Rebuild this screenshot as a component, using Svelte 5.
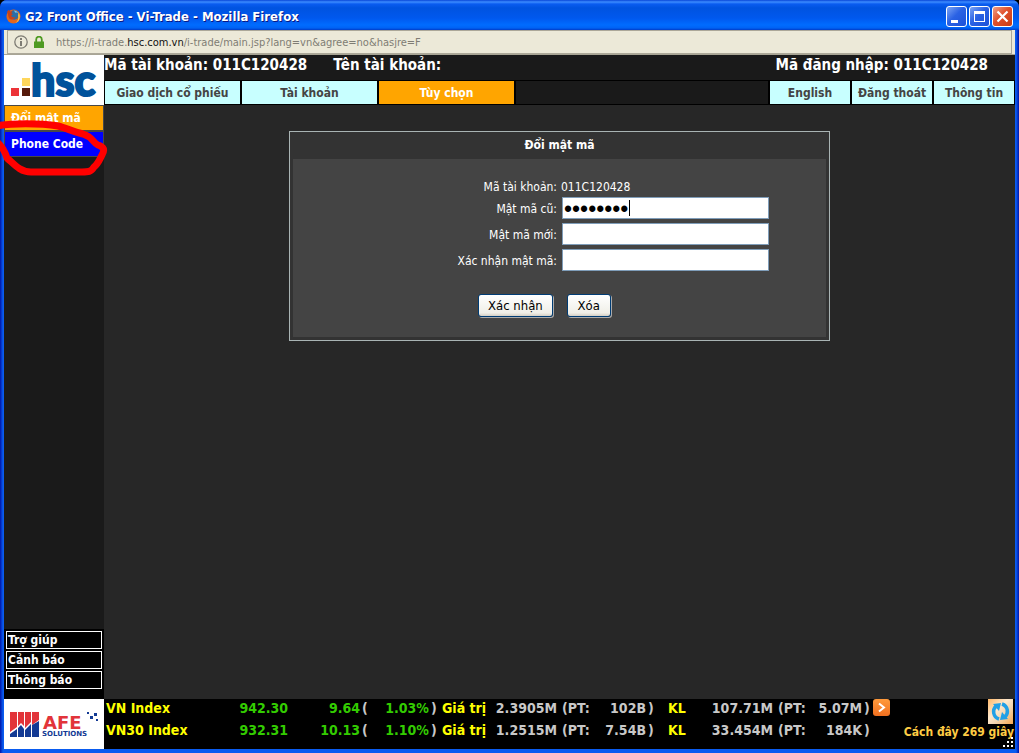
<script>
  const tabs = ['Giao dịch cổ phiếu', 'Tài khoản', 'Tùy chọn'];
  const actions = ['English', 'Đăng thoát', 'Thông tin'];
  const help = ['Trợ giúp', 'Cảnh báo', 'Thông báo'];
  const columns = [116, 68, 72, 10, 59, 11, 46, 71, 38, 51, 20, 34, 73, 38, 51, 9, 20];
  const indices = [
    { name: 'VN Index', value: '942.30', change: '9.64', pct: '1.03%', amount: '2.3905M', amountPt: '102B', volume: '107.71M', volumePt: '5.07M' },
    { name: 'VN30 Index', value: '932.31', change: '10.13', pct: '1.10%', amount: '1.2515M', amountPt: '7.54B', volume: '33.454M', volumePt: '184K' }
  ];
  let oldPassword = $state('abcdefgh');
  let newPassword = $state('');
  let confirmPassword = $state('');

  function clearForm() {
    oldPassword = '';
    newPassword = '';
    confirmPassword = '';
  }
</script>

<div class="window">
  <header class="titlebar">
    <svg class="fox" width="15" height="15" viewBox="0 0 15 15" aria-hidden="true">
      <circle cx="7.5" cy="7.5" r="7" fill="#e5661b" />
      <circle cx="8.2" cy="6" r="4.7" fill="#2b6ea8" />
      <path d="M8 1.5c2 .2 3.3 1 4.2 2.5-1-.6-2-.7-3-.3z" fill="#7cc4e8" />
      <path d="M1 3c.6-1 1-1.700 2-2.200.2 1 .8 1.400 1.800 1.600l2 .2-1.500 1.700 1.500 1-1.600 1.300c.5 2.200 3.200 2.300 4.500 1.200-1 3-5 3.700-6.700 1.200C2 7.500 2.400 5 1 3z" fill="#c8431a" />
      <path d="M12.500 3.500c2.500 3.500 1.300 9-3 10.500 2.200-1.500 3.400-4.500 2.600-7.500z" fill="#f9c846" />
    </svg>
    <h1>G2 Front Office - Vi-Trade - Mozilla Firefox</h1>
    <div class="winbuttons">
      <button type="button" aria-label="Minimize">
        <svg width="21" height="21" viewBox="0 0 21 21"><path d="M5 14h7v3H5z" fill="#fff" /></svg>
      </button>
      <button type="button" aria-label="Maximize">
        <svg width="21" height="21" viewBox="0 0 21 21"><path d="M5 5h11v11H5zM6 8v7h9V8z" fill="#fff" fill-rule="evenodd" /></svg>
      </button>
      <button type="button" class="close" aria-label="Close">
        <svg width="21" height="21" viewBox="0 0 21 21"><path d="M5.500 5.500l10 10M15.500 5.500l-10 10" stroke="#fff" stroke-width="2.200" /></svg>
      </button>
    </div>
  </header>

  <div class="address">
    <div class="addressbox">
      <svg width="14" height="14" viewBox="0 0 14 14" aria-hidden="true">
        <circle cx="7" cy="7" r="6.200" fill="none" stroke="#7d7b73" stroke-width="1.300" />
        <path d="M6 3h2v2H6zM6 6h2v5H6z" fill="#7d7b73" />
      </svg>
      <svg class="lock" width="10" height="12" viewBox="0 0 10 12" aria-hidden="true">
        <path d="M2.200 6V3.500a2.800 2.800 0 0 1 5.600 0V6" fill="none" stroke="#4f9a22" stroke-width="1.800" />
        <path d="M0 5.500h10V12H0z" fill="#4f9a22" />
      </svg>
      <span class="url">https://i-trade.<b>hsc.com.vn</b>/i-trade/main.jsp?lang=vn&amp;agree=no&amp;hasjre=F</span>
    </div>
  </div>

  <div class="app">
    <aside class="sidebar">
      <svg class="hsc" width="100" height="50" viewBox="0 0 100 50" role="img" aria-label="hsc">
        <path d="M18 23h8v8h-8z" fill="#fed65b" />
        <path d="M7 33h8v8H7z" fill="#ec3338" />
        <path d="M18 33h8v8h-8z" fill="#561a0b" />
        <text x="27" y="41" class="hsctext">hsc</text>
      </svg>
      <nav class="menu">
        <a href="#password" class="current">Đổi mật mã</a>
        <a href="#phone">Phone Code</a>
      </nav>
      <div class="help">
        {#each help as item}
          <button type="button">{item}</button>
        {/each}
      </div>
    </aside>

    <div class="content">
      <div class="account">
        <span>Mã tài khoản: 011C120428</span>
        <span>Tên tài khoản:</span>
        <span class="login">Mã đăng nhập: 011C120428</span>
      </div>
      <nav class="tabs">
        {#each tabs as tab, i}
          <a href="#tab" class="tab" class:selected={i === 2}>{tab}</a>
        {/each}
        <span class="filler"></span>
        {#each actions as action}
          <a href="#action" class="action">{action}</a>
        {/each}
      </nav>
      <main>
        <form class="panel" onsubmit={(e) => e.preventDefault()}>
          <h2>Đổi mật mã</h2>
          <div class="fields">
            <div class="row first">
              <span class="label">Mã tài khoản:</span>
              <span class="value">011C120428</span>
            </div>
            <div class="row">
              <label for="old">Mật mã cũ:</label>
              <div class="box">
                <input id="old" type="password" autocomplete="off" bind:value={oldPassword} />
                <span class="caret"></span>
              </div>
            </div>
            <div class="row">
              <label for="new">Mật mã mới:</label>
              <div class="box"><input id="new" type="password" autocomplete="off" bind:value={newPassword} /></div>
            </div>
            <div class="row">
              <label for="confirm">Xác nhận mật mã:</label>
              <div class="box"><input id="confirm" type="password" autocomplete="off" bind:value={confirmPassword} /></div>
            </div>
            <div class="buttons">
              <button type="submit">Xác nhận</button>
              <button type="button" onclick={clearForm}>Xóa</button>
            </div>
          </div>
        </form>
      </main>
    </div>
  </div>

  <footer>
    <svg class="afe" width="100" height="50" viewBox="0 0 100 50" role="img" aria-label="AFE Solutions">
      <path d="M6 13h7v15l-7 5zM14 13h6v14l-3-3-3 3zM21 13h6v10l-6 6zM28 13h7v8l-7 5z" fill="#e2343a" />
      <path d="M6 38v-3l7-5v8zM14 38v-9l3-3 3 4v8zM21 38v-7l6-6v13zM28 38V26l7-4v16z" fill="#133a94" />
      <text x="39" y="30" class="afetext">AFE</text>
      <text x="38" y="37" class="soltext">SOLUTIONS</text>
      <path d="M83 13h2v2h-2zM86 17h3v3h-3zM90 14h3v3h-3zM92 20h2v2h-2z" fill="#133a94" />
    </svg>
    <table>
      <colgroup>
        {#each columns as width}<col style="width: {width}px" />{/each}
      </colgroup>
      <tbody>
        {#each indices as row, i}
          <tr>
            <th scope="row">{row.name}</th>
            <td class="up">{row.value}</td>
            <td class="up">{row.change}</td>
            <td class="left">(</td>
            <td class="up">{row.pct}</td>
            <td class="left">)</td>
            <td class="left key">Giá trị</td>
            <td>{row.amount}</td>
            <td class="pt">(PT:</td>
            <td>{row.amountPt}</td>
            <td class="left">)</td>
            <td class="left key">KL</td>
            <td>{row.volume}</td>
            <td class="pt">(PT:</td>
            <td>{row.volumePt}</td>
            <td class="left">)</td>
            <td class="left">
              {#if i === 0}
                <button type="button" class="more" aria-label="Next">
                  <svg width="17" height="17" viewBox="0 0 17 17"><path d="M6 4.500l5 4-5 4" fill="none" stroke="#fff" stroke-width="2" /></svg>
                </button>
              {/if}
            </td>
          </tr>
        {/each}
      </tbody>
    </table>
    <div class="status">
      <button type="button" class="refresh" aria-label="Refresh">
        <svg width="25" height="25" viewBox="0 0 25 25">
          <path d="M11 20C5 18 4 11 8 7" fill="none" stroke="#22a0e6" stroke-width="3.500" />
          <path d="M5 5l8-1-2 8z" fill="#22a0e6" />
          <path d="M14 5c6 2 7 9 3 13" fill="none" stroke="#22a0e6" stroke-width="3.500" />
          <path d="M20 20l-8 1 2-8z" fill="#22a0e6" />
        </svg>
      </button>
      <span>Cách đây 269 giây</span>
      <svg class="grip" width="12" height="12" viewBox="0 0 12 12" aria-hidden="true">
        <path d="M8 0h2v2H8zM4 4h2v2H4zM8 4h2v2H8zM0 8h2v2H0zM4 8h2v2H4zM8 8h2v2H8z" fill="#fff" />
      </svg>
    </div>
  </footer>

  <svg class="marker" width="110" height="60" viewBox="0 0 110 60" aria-hidden="true">
    <path d="M-3 8C10 5 40 5 58 8C66 10 74 14 83 16C93 19 93 25 98 27C104 29 105 32 102 37C99 43 98 46 94 49C91 54 88 54 82 54H31C20 54 14 46 7 40C5 34 2 28-3 24" fill="none" stroke="#f00" stroke-width="7" stroke-linejoin="round" />
  </svg>
</div>

<style>
  :global(body) {
    margin: 0;
    background: #000;
  }

  .window {
    position: relative;
    box-sizing: border-box;
    min-height: 100vh;
    display: flex;
    flex-direction: column;
    padding: 0 4px 4px;
    background: linear-gradient(90deg, #0014a8, #0a5cf0 3px, #0a5cf0 calc(100% - 3px), #0014a8);
    border-radius: 7px 7px 0 0;
    overflow: hidden;
    font-family: 'DejaVu Sans Condensed', 'DejaVu Sans', sans-serif;
    font-size: 12px;
    color: #fff;
  }

  a {
    color: inherit;
    text-decoration: none;
  }

  button {
    font-family: inherit;
    cursor: pointer;
  }

  svg {
    display: block;
    flex: none;
  }

  .titlebar {
    display: flex;
    align-items: center;
    gap: 4px;
    height: 30px;
    margin: 0 -4px;
    padding: 3px 6px 0 6px;
    box-sizing: border-box;
    background: linear-gradient(#0846d8, #3c8cff 2px, #0a5cf0 4px, #0053e0 8px, #0058ee 18px, #006cff 25px, #0062f4 28px, #003cc8);
  }

  h1 {
    flex: 1;
    margin: 0;
    font-size: 13px;
    line-height: 20px;
    text-shadow: 1px 1px #0a1883;
  }

  .winbuttons {
    display: flex;
    gap: 2px;
  }

  .winbuttons button {
    width: 21px;
    height: 21px;
    padding: 0;
    border: 1px solid #fff;
    border-radius: 3px;
    background: linear-gradient(135deg, #7ca4f4, #2a62e4 45%, #1c50d8);
  }

  .winbuttons svg {
    margin: -1px;
  }

  .winbuttons .close {
    background: linear-gradient(135deg, #f0a088, #e0502c 45%, #c83c14);
  }

  .address {
    padding: 0 3px 0 3px;
    background: #ece9d8;
    border-bottom: 1px solid #a8a595;
  }

  .addressbox {
    display: flex;
    align-items: center;
    gap: 6px;
    height: 22px;
    padding-left: 6px;
    border: 1px solid #aca899;
    background: #ece9d8;
  }

  .lock {
    margin-right: 6px;
  }

  .url {
    font-size: 11px;
    color: #7f7d74;
  }

  .url b {
    font-weight: normal;
    color: #111;
  }

  .app {
    flex: 1;
    display: flex;
    background: #272727;
  }

  .sidebar {
    width: 100px;
    display: flex;
    flex-direction: column;
    background: #1a1a1a;
  }

  .hsc,
  .afe {
    background: #fff;
  }

  .hsctext {
    font: 900 43px Lato, 'Open Sans', sans-serif;
    fill: #00529b;
    stroke: #00529b;
    stroke-width: 2px;
  }

  .menu {
    flex: 1;
    font-weight: bold;
  }

  .menu a {
    display: block;
    height: 24px;
    padding-left: 6px;
    border: 1px solid #484848;
    line-height: 25px;
    background: #00f;
  }

  .menu .current {
    background: #ffa500;
  }

  .help {
    display: flex;
    flex-direction: column;
    gap: 2px;
    padding: 2px 2px 10px;
    background: #000;
  }

  .help button {
    height: 18px;
    box-sizing: border-box;
    padding: 0 1px;
    border: 1px solid #fff;
    background: #000;
    color: #fff;
    font-size: 12px;
    font-weight: bold;
    line-height: 16px;
    text-align: left;
  }

  .content {
    flex: 1;
    display: flex;
    flex-direction: column;
  }

  .account {
    display: flex;
    gap: 26px;
    height: 25px;
    padding-right: 27px;
    background: #1a1a1a;
    font-size: 15px;
    font-weight: bold;
    line-height: 20px;
  }

  .login {
    margin-left: auto;
  }

  .tabs {
    display: flex;
    gap: 2px;
    height: 23px;
    padding: 1px;
    background: #000;
    color: #444;
    font-size: 12px;
    font-weight: bold;
    line-height: 25px;
    text-align: center;
  }

  .tab,
  .action {
    background: #c8ffff;
  }

  .tab {
    width: 135px;
  }

  .action {
    width: 80px;
    white-space: nowrap;
  }

  .tabs .selected {
    background: #ffa500;
    color: #fff;
  }

  .filler {
    flex: 1;
    background: #1a1a1a;
  }

  main {
    padding: 26px 16px;
  }

  .panel {
    max-width: 533px;
    margin: 0 auto;
    padding: 0 3px 3px;
    border: 1px solid #a9b4b4;
    background: #333;
  }

  h2 {
    margin: 0;
    font-size: 12px;
    line-height: 27px;
    text-align: center;
  }

  .fields {
    padding: 18px 0 20px;
    background: #444;
  }

  .row {
    display: grid;
    grid-template-columns: 264px 1fr;
    gap: 5px;
    align-items: center;
    height: 26px;
  }

  .first {
    height: 18px;
    gap: 4px;
  }

  .row label,
  .label,
  .value {
    padding-top: 2px;
  }

  .row label,
  .label {
    text-align: right;
  }

  .box {
    position: relative;
    width: 207px;
    height: 22px;
  }

  input {
    display: block;
    width: 100%;
    height: 22px;
    box-sizing: border-box;
    padding: 2px 1px 0;
    border: 1px solid #7f9db9;
    background: #fff;
    color: #000;
    font-family: 'Liberation Sans', sans-serif;
    font-size: 23px;
    outline: none;
  }

  .caret {
    position: absolute;
    left: 67px;
    top: 3px;
    width: 1px;
    height: 16px;
    background: #000;
  }

  .buttons {
    display: flex;
    gap: 14px;
    padding: 21px 0 0 185px;
  }

  .buttons button {
    min-width: 44px;
    height: 23px;
    padding: 0 9px;
    border: 1px solid #003c74;
    border-radius: 3px;
    background: linear-gradient(#fff, #f0efe8 85%, #d6d0c5);
    color: #000;
    font-size: 13px;
    box-shadow: 1px 1px #aaa;
  }

  footer {
    display: flex;
    height: 50px;
    background: #000;
  }

  .afetext {
    font: bold 18px 'DejaVu Sans', sans-serif;
    fill: #e2343a;
  }

  .soltext {
    font: bold 7px 'DejaVu Sans', sans-serif;
    fill: #133a94;
  }

  table {
    width: 787px;
    flex: none;
    height: 44px;
    table-layout: fixed;
    border-collapse: collapse;
    font-size: 14px;
    font-weight: bold;
    line-height: 18px;
    color: #c8c8c8;
  }

  th,
  td {
    height: 22px;
    padding: 0;
    text-align: right;
    vertical-align: top;
    white-space: nowrap;
  }

  th {
    padding-left: 2px;
    text-align: left;
    color: #ff0;
  }

  .left {
    padding-left: 2px;
    text-align: left;
  }

  .pt {
    padding-left: 5px;
    text-align: left;
  }

  .up {
    color: #33cc00;
  }

  .key {
    color: #ff0;
  }

  .more {
    display: block;
    width: 17px;
    height: 17px;
    padding: 0;
    border: 0;
    border-radius: 3px;
    background: linear-gradient(#ff9a3c, #f07020);
  }

  .status {
    position: relative;
    flex: 1;
    display: flex;
    flex-direction: column;
    align-items: flex-end;
    padding-right: 1px;
    color: #fc4;
    font-size: 12px;
    font-weight: bold;
    line-height: 16px;
    white-space: nowrap;
  }

  .refresh {
    width: 25px;
    height: 25px;
    padding: 0;
    border: 0;
    margin-right: 1px;
    background: linear-gradient(135deg, #ffb868, #ffe8cc 40%, #f4d8b4 60%, #f8a850);
  }

  .grip {
    position: absolute;
    right: 0;
    bottom: 0;
  }

  .marker {
    position: absolute;
    left: 0;
    top: 118px;
    pointer-events: none;
  }
</style>
